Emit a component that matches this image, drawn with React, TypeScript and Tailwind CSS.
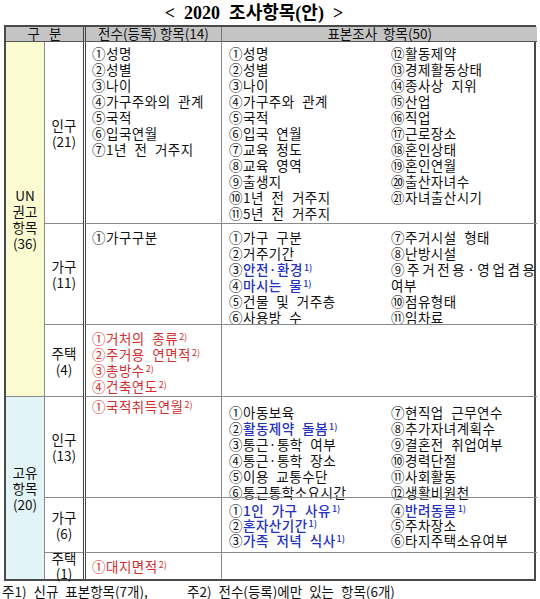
import React from 'react';

type Item = { n: string; t: string; c?: 'red' | 'blue'; s?: string; wide?: boolean };

const FONT = { fontFamily: '"Noto Sans CJK KR", "Noto Sans", sans-serif' };

function Line({ it }: { it: Item }) {
  const col = it.c === 'red' ? 'text-[#d12f2f]' : it.c === 'blue' ? 'text-[#2430c0] font-medium' : 'text-[#111]';
  return (
    <div className={`whitespace-nowrap [word-spacing:4px] ${it.wide ? 'tracking-[2.6px]' : 'tracking-[0.5px]'}`}>
      <span className={it.c === 'red' ? col : 'text-[#111]'}>{it.n}</span>
      <span className={col}>{it.t}</span>
      {it.s && <sup className={`${col} text-[9px] ml-px tracking-normal`}>{it.s}</sup>}
    </div>
  );
}

function List({ items, className = '' }: { items: Item[]; className?: string }) {
  return (
    <div className={`leading-[16px] ${className}`}>
      {items.map((it, i) => <Line key={i} it={it} />)}
    </div>
  );
}

const p = (n: string, t: string, c?: 'red' | 'blue', s?: string): Item => ({ n, t, c, s });

const unPopA = [p('①', '성명'), p('②', '성별'), p('③', '나이'), p('④', '가구주와의 관계'), p('⑤', '국적'), p('⑥', '입국연월'), p('⑦', '1년 전 거주지')];
const unPopL = [p('①', '성명'), p('②', '성별'), p('③', '나이'), p('④', '가구주와 관계'), p('⑤', '국적'), p('⑥', '입국 연월'), p('⑦', '교육 정도'), p('⑧', '교육 영역'), p('⑨', '출생지'), p('⑩', '1년 전 거주지'), p('⑪', '5년 전 거주지')];
const unPopR = [p('⑫', '활동제약'), p('⑬', '경제활동상태'), p('⑭', '종사상 지위'), p('⑮', '산업'), p('⑯', '직업'), p('⑰', '근로장소'), p('⑱', '혼인상태'), p('⑲', '혼인연월'), p('⑳', '출산자녀수'), p('㉑', '자녀출산시기')];

const unHhA = [p('①', '가구구분')];
const unHhL = [p('①', '가구 구분'), p('②', '거주기간'), p('③', '안전·환경', 'blue', '1)'), p('④', '마시는 물', 'blue', '1)'), p('⑤', '건물 및 거주층'), p('⑥', '사용방 수')];
const unHhR = [p('⑦', '주거시설 형태'), p('⑧', '난방시설'), { n: '⑨', t: '주거전용·영업겸용', wide: true }, p('', '여부'), p('⑩', '점유형태'), p('⑪', '임차료')];

const unHouseA = [p('①', '거처의 종류', 'red', '2)'), p('②', '주거용 연면적', 'red', '2)'), p('③', '총방수', 'red', '2)'), p('④', '건축연도', 'red', '2)')];

const owPopA = [p('①', '국적취득연월', 'red', '2)')];
const owPopL = [p('①', '아동보육'), p('②', '활동제약 돌봄', 'blue', '1)'), p('③', '통근·통학 여부'), p('④', '통근·통학 장소'), p('⑤', '이용 교통수단'), p('⑥', '통근통학소요시간')];
const owPopR = [p('⑦', '현직업 근무연수'), p('⑧', '추가자녀계획수'), p('⑨', '결혼전 취업여부'), p('⑩', '경력단절'), p('⑪', '사회활동'), p('⑫', '생활비원천')];

const owHhL = [p('①', '1인 가구 사유', 'blue', '1)'), p('②', '혼자산기간', 'blue', '1)'), p('③', '가족 저녁 식사', 'blue', '1)')];
const owHhR = [p('④', '반려동물', 'blue', '1)'), p('⑤', '주차장소'), p('⑥', '타지주택소유여부')];

const owHouseA = [p('①', '대지면적', 'red', '2)')];

function Sub({ a, b, top = true }: { a: string; b: string; top?: boolean }) {
  return (
    <div className={`flex flex-col items-center justify-center border-l border-[#8a8a8a] leading-[16px] text-[#111] ${top ? 'border-t' : ''}`}>
      <span>{a}</span>
      <span>{b}</span>
    </div>
  );
}

export default function App() {
  return (
    <div className="w-[540px] h-[599px] overflow-hidden bg-white text-[13.5px] text-[#111]" style={FONT}>
      <div className="h-[25px] flex items-center justify-center pr-8 pt-px">
        <span className="whitespace-pre text-[18px] font-bold text-black" style={{ fontFamily: '"Liberation Serif", "Noto Sans CJK KR", serif' }}>
          {'<  2020  조사항목(안)  >'}
        </span>
      </div>

      <div className="mx-[4px] grid grid-cols-[38px_39px_138px_1fr] grid-rows-[15px_181px_101px_72px_101px_55px_27px] border-2 border-[#4a4a4a]">
        {/* header */}
        <div className="col-span-2 bg-[#c4c4c4] border-b border-[#555] flex items-center justify-center leading-none whitespace-pre">{'구   분'}</div>
        <div className="bg-[#c4c4c4] border-b border-[#555] border-l-[3px] border-double border-l-[#444] flex items-center justify-center leading-none">전수(등록) 항목(14)</div>
        <div className="bg-[#c4c4c4] border-b border-[#555] border-l border-l-[#777] flex items-center justify-center leading-none whitespace-pre">{'표본조사  항목(50)'}</div>

        {/* UN group */}
        <div className="row-span-3 bg-[#fbfbd2] flex flex-col items-center justify-center leading-[16px]">
          <span>UN</span>
          <span>권고</span>
          <span>항목</span>
          <span>(36)</span>
        </div>

        <Sub a="인구" b="(21)" top={false} />
        <div className="border-l-[3px] border-double border-[#444] pl-[6px] pt-[3px]">
          <List items={unPopA} />
        </div>
        <div className="border-l border-[#8a8a8a] pl-[7px] pt-[3px] flex">
          <List items={unPopL} className="w-[162px]" />
          <List items={unPopR} />
        </div>

        <Sub a="가구" b="(11)" />
        <div className="border-t border-t-[#8a8a8a] border-l-[3px] border-double border-l-[#444] pl-[6px] pt-[5px]">
          <List items={unHhA} />
        </div>
        <div className="border-t border-l border-[#8a8a8a] pl-[7px] pt-[5px] flex">
          <List items={unHhL} className="w-[162px]" />
          <List items={unHhR} />
        </div>

        <Sub a="주택" b="(4)" />
        <div className="border-t border-t-[#8a8a8a] border-l-[3px] border-double border-l-[#444] pl-[6px] pt-[5px]">
          <List items={unHouseA} />
        </div>
        <div className="border-t border-l border-[#8a8a8a]" />

        {/* own group */}
        <div className="row-span-3 bg-[#e2f4f6] border-t border-[#8a8a8a] flex flex-col items-center justify-center leading-[16px]">
          <span>고유</span>
          <span>항목</span>
          <span>(20)</span>
        </div>

        <Sub a="인구" b="(13)" />
        <div className="border-t border-t-[#8a8a8a] border-l-[3px] border-double border-l-[#444] pl-[6px] pt-px">
          <List items={owPopA} />
        </div>
        <div className="border-t border-l border-[#8a8a8a] pl-[7px] pt-[7px] flex">
          <List items={owPopL} className="w-[162px]" />
          <List items={owPopR} />
        </div>

        <Sub a="가구" b="(6)" />
        <div className="border-t border-t-[#8a8a8a] border-l-[3px] border-double border-l-[#444]" />
        <div className="border-t border-l border-[#8a8a8a] pl-[7px] pt-[5px] flex">
          <List items={owHhL} className="w-[162px] !leading-[15px]" />
          <List items={owHhR} className="!leading-[15px]" />
        </div>

        <div className="flex flex-col items-center justify-center border-l border-t border-[#8a8a8a] leading-[15px]">
          <span>주택</span>
          <span>(1)</span>
        </div>
        <div className="border-t border-t-[#8a8a8a] border-l-[3px] border-double border-l-[#444] pl-[6px] flex items-center">
          <List items={owHouseA} />
        </div>
        <div className="border-t border-l border-[#8a8a8a]" />
      </div>

      <div className="flex pl-[2px] pt-[1px] leading-[18px] whitespace-pre [word-spacing:4px]">
        <span className="w-[185px]">주1) 신규 표본항목(7개),</span>
        <span>주2) 전수(등록)에만 있는 항목(6개)</span>
      </div>
    </div>
  );
}
